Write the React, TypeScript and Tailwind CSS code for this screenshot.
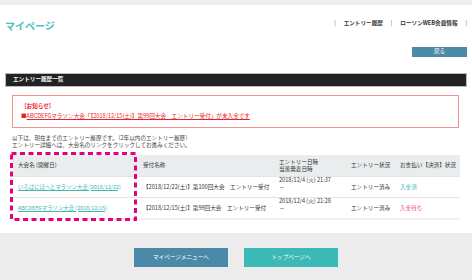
const rows = [
  {
    name: "いろはにほへとマラソン大会 (2018/12/22)",
    uketsuke: "【2018/12/22(土)】第100回大会　エントリー受付",
    date: "2018/12/4 (火) 21:37",
    status: "エントリー済み",
    pay: "入金済",
    payColor: "text-[#3bb8b4]",
  },
  {
    name: "ABCDEFGマラソン大会 (2018/12/15)",
    uketsuke: "【2018/12/15(土)】第99回大会　エントリー受付",
    date: "2018/12/4 (火) 21:28",
    status: "エントリー済み",
    pay: "入金待ち",
    payColor: "text-[#ee4a8a]",
  },
];

function DashedBox() {
  return (
    <svg
      className="absolute left-[-3px] top-[-3px] pointer-events-none"
      width="127"
      height="69"
      viewBox="0 0 127 69"
    >
      <rect
        x="1.5"
        y="1.5"
        width="124"
        height="66"
        fill="none"
        stroke="#e5007f"
        strokeWidth="3"
        strokeDasharray="5 3.5"
      />
    </svg>
  );
}

export default function App() {
  return (
    <div className="w-[472px] h-[280px] bg-white overflow-hidden font-['Noto_Sans_CJK_JP','Noto_Sans',sans-serif] text-[#333] text-[5.6px]">
      <div className="h-[5px] bg-[#eeeeee]" />

      {/* header */}
      <div className="mt-[10px] h-[20px] flex items-center justify-between pl-[5px] pr-[5px]">
        <div className="text-[10px] font-bold leading-none text-[#4fc1c0] pt-[1px]">マイページ</div>
        <nav className="flex items-center gap-[8px] leading-none mb-[2px]">
          <span className="text-[#555]">|</span>
          <span className="font-bold">エントリー履歴</span>
          <span className="text-[#555]">|</span>
          <span className="font-bold">ローソンWEB会員情報</span>
          <span className="text-[#555]">|</span>
        </nav>
      </div>

      <div className="mt-[12px] flex justify-end pr-[5px]">
        <button className="w-[55px] h-[10px] bg-[#4b8aa8] text-white leading-none flex items-center justify-center">
          戻る
        </button>
      </div>

      {/* section title */}
      <div className="mt-[16px] mx-[5px] h-[14px] bg-[#222] border border-[#bbbbbb] flex items-center pl-[7px]">
        <span className="text-white font-bold leading-none">エントリー履歴一覧</span>
      </div>

      {/* notice */}
      <div className="mt-[8px] ml-[12px] mr-[13px] h-[33px] border border-[#f39393] px-[8px] pt-[5px] leading-[10px] text-[#e8222a]">
        <div className="font-bold">［お知らせ］</div>
        <div>
          ■<span className="underline">ABCDEFGマラソン大会「【2018/12/15(土)】第99回大会　エントリー受付」が未入金です</span>
        </div>
      </div>

      <div className="mt-[7px] ml-[12px] leading-[7px] text-[#444]">
        <div>以下は、現在までのエントリー履歴です。（2年以内のエントリー履歴）</div>
        <div>エントリー詳細へは、大会名のリンクをクリックしてお進みください。</div>
      </div>

      {/* table */}
      <div className="relative mt-[6px] ml-[13px] w-[447px]">
        <div className="grid grid-cols-[125px_136px_72px_49px_65px] h-[21px] bg-[#e9eded] items-center leading-[7px]">
          <div className="pl-[5px]">大会名 (開催日)</div>
          <div className="pl-[5px]">受付名称</div>
          <div className="pl-[5px]">
            <div>エントリー日時</div>
            <div>当落発表日時</div>
          </div>
          <div className="pl-[5px]">エントリー状況</div>
          <div className="pl-[5px]">お支払い【決済】状況</div>
        </div>
        {rows.map((r, i) => (
          <div
            key={i}
            className={`grid grid-cols-[125px_136px_72px_49px_65px] h-[21px] border-t border-[#e4e4e4] items-center leading-[7px] ${
              i === rows.length - 1 ? "border-b-2 border-b-[#f0f0f0] h-[23px]" : ""
            }`}
          >
            <div className="pl-[5px]">
              <span className="text-[#3bb8b4] underline text-[5.4px]">{r.name}</span>
            </div>
            <div className="pl-[5px]">{r.uketsuke}</div>
            <div className="pl-[5px] self-start">
              <div>{r.date}</div>
              <div>－</div>
            </div>
            <div className="pl-[5px]">{r.status}</div>
            <div className={`pl-[5px] ${r.payColor}`}>{r.pay}</div>
          </div>
        ))}
        <DashedBox />
      </div>

      {/* footer */}
      <div className="mt-[13px] h-[47px] bg-[#ececec] flex justify-center gap-[16px] pt-[15px]">
        <button className="w-[94px] h-[19px] bg-[#4a89a7] text-white leading-none flex items-center justify-center">
          マイページメニューへ
        </button>
        <button className="w-[94px] h-[19px] bg-[#3ab9b6] text-white leading-none flex items-center justify-center">
          トップページへ
        </button>
      </div>
    </div>
  );
}
